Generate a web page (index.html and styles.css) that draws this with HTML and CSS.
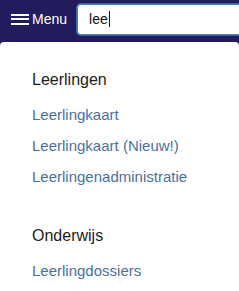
FILE: index.html
```html
<!DOCTYPE html>
<html lang="nl">
<head>
    <meta charset="UTF-8">
    <meta name="viewport" content="width=device-width, initial-scale=1.0">
    <title>Menu zoeken</title>
    <link rel="stylesheet" href="styles.css">
</head>
<body>
    <div class="page">
        <header class="topbar">
            <button class="menu-button">
                <span class="hamburger"><span></span><span></span><span></span></span>
                <span class="menu-label">Menu</span>
            </button>
            <div class="search-box">
                <span class="search-text">lee</span><span class="caret"></span>
            </div>
        </header>
        <div class="results">
            <div class="section">
                <h3 class="section-title">Leerlingen</h3>
                <a href="#" class="result-link">Leerlingkaart</a>
                <a href="#" class="result-link">Leerlingkaart (Nieuw!)</a>
                <a href="#" class="result-link">Leerlingenadministratie</a>
            </div>
            <div class="section">
                <h3 class="section-title">Onderwijs</h3>
                <a href="#" class="result-link">Leerlingdossiers</a>
            </div>
        </div>
    </div>
</body>
</html>
```

FILE: styles.css
```css
:root {
    --nav-color: #221b5c;
    --link-color: #4a70a1;
    --title-color: #1b1b1b;
    --focus-color: #4f81b6;
}
body, html { margin: 0; padding: 0; height: 100%; font-family: "Liberation Sans", Arial, sans-serif; background: var(--nav-color); }
.page { display: flex; flex-direction: column; height: 100%; }
.topbar { display: flex; align-items: center; height: 42px; padding-left: 11px; box-sizing: border-box; }
.menu-button { display: flex; align-items: center; gap: 3px; background: none; border: none; padding: 0; margin-top: -4px; color: white; font-family: inherit; font-size: 14px; cursor: pointer; }
.hamburger { display: flex; flex-direction: column; gap: 2.5px; width: 18px; }
.hamburger span { display: block; height: 2px; background: white; }
.menu-label { line-height: 16px; }
.search-box { display: flex; align-items: center; flex: 1; height: 29px; margin: -4px 0 0 10px; padding-left: 11px; background: white; border: 1px solid var(--focus-color); border-right: none; border-radius: 4px 0 0 4px; box-shadow: 0 0 0 1px #3a669a; font-size: 14px; color: #111; }
.caret { display: inline-block; width: 1px; height: 16px; background: #111; margin-left: 1px; }
.results { flex: 1; background: white; border-radius: 4px 4px 0 0; padding: 28px 0 0 32px; }
.section + .section { margin-top: 34px; }
.section-title { margin: 0 0 9px 0; font-size: 16px; font-weight: normal; line-height: 20px; color: var(--title-color); }
.result-link { display: block; font-size: 15px; line-height: 31px; color: var(--link-color); text-decoration: none; }
```
